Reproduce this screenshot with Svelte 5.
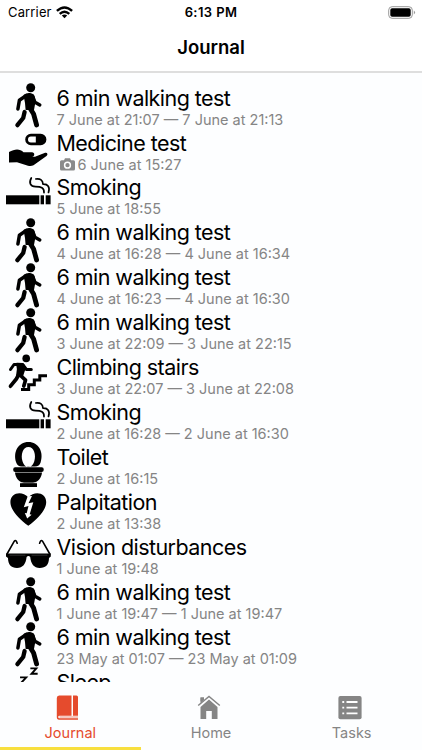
<script>
  const entries = [
    { icon: 'walk', title: '6 min walking test', time: '7 June at 21:07 — 7 June at 21:13' },
    { icon: 'medicine', title: 'Medicine test', time: '6 June at 15:27', photo: true },
    { icon: 'smoke', title: 'Smoking', time: '5 June at 18:55' },
    { icon: 'walk', title: '6 min walking test', time: '4 June at 16:28 — 4 June at 16:34' },
    { icon: 'walk', title: '6 min walking test', time: '4 June at 16:23 — 4 June at 16:30' },
    { icon: 'walk', title: '6 min walking test', time: '3 June at 22:09 — 3 June at 22:15' },
    { icon: 'stairs', title: 'Climbing stairs', time: '3 June at 22:07 — 3 June at 22:08' },
    { icon: 'smoke', title: 'Smoking', time: '2 June at 16:28 — 2 June at 16:30' },
    { icon: 'toilet', title: 'Toilet', time: '2 June at 16:15' },
    { icon: 'heart', title: 'Palpitation', time: '2 June at 13:38' },
    { icon: 'glasses', title: 'Vision disturbances', time: '1 June at 19:48' },
    { icon: 'walk', title: '6 min walking test', time: '1 June at 19:47 — 1 June at 19:47' },
    { icon: 'walk', title: '6 min walking test', time: '23 May at 01:07 — 23 May at 01:09' },
    { icon: 'sleep', title: 'Sleep' }
  ];
</script>

{#snippet glyph(name)}
  <svg class="glyph" viewBox="0 0 45 45" fill="none" stroke="#000" stroke-linecap="round" stroke-linejoin="round">
    {#if name === 'walk'}
      <circle cx="24.7" cy="4.8" r="4.5" fill="#000" stroke="none" />
      <path d="M17.5 12Q21 9.4 24 10Q28 10.4 28.8 14L29.6 18.2L28 27L19.6 27L19 20Z" fill="#000" stroke="none" />
      <path d="M20 12.6L13.4 17.3L11.9 26" stroke-width="3.5" />
      <path d="M26.5 13L29 19.3L33.8 22" stroke-width="3.4" />
      <path d="M23.3 24L27.6 31L30.6 42" stroke-width="4.8" />
      <path d="M18.6 29L17.2 35L11.4 42.2" stroke-width="4.3" />
    {:else if name === 'medicine'}
      <rect x="20.6" y="7.2" width="18.4" height="8.6" rx="4.3" stroke-width="2.8" />
      <path d="M29.8 7h5a4.5 4.5 0 0 1 0 9h-5z" fill="#000" stroke="none" />
      <path d="M3 24C9 20.5 14 20.5 17.5 24.3H26C29 24.3 29 28.5 26 28.8H19.5H29L38.5 25C41.5 24 42.3 26.5 40.5 28L27.5 37.3Q25 38.4 22 37.7L11 34.2L3 34.5Z" fill="#000" stroke="none" />
    {:else if name === 'smoke'}
      <g fill="#000" stroke="none">
        <rect x="0" y="22.3" width="33.3" height="9" />
        <rect x="34.6" y="22.3" width="3.4" height="9" />
        <rect x="39.7" y="22.3" width="4.9" height="9" />
      </g>
      <path d="M25.3 5C22.5 10 24.5 13.5 29.5 13.7C35 13.8 38.3 14.5 38 19.6" stroke-width="1.7" />
      <path d="M29.8 6C34.5 5.5 36.8 7 37 11.2C42 11 44.2 14 42.5 19.4" stroke-width="1.7" />
    {:else if name === 'stairs'}
      <circle cx="20.2" cy="5.4" r="3.8" fill="#000" stroke="none" />
      <path d="M11 10.7L17 11L19 14.5L16.2 23L11 22.3L11.8 16Z" fill="#000" stroke-width="1.8" />
      <path d="M14 11.4L8 11.5L4.5 16.5M17 12L20.5 16.5H25.3" stroke-width="3" />
      <path d="M12.5 22L10.3 26L4.5 33.2M14 22L19.5 27.2L17.8 33" stroke-width="3.7" />
      <path d="M15 36.5H22.7V31.7H28.3V27H33.8V22.8H41" stroke-width="3" stroke-linecap="butt" stroke-linejoin="miter" />
    {:else if name === 'toilet'}
      <path fill="#000" stroke="none" fill-rule="evenodd" d="M22.4 0C32.6 0 38 10 34.6 20.5C33.7 23.3 32 24.4 29 24.4H15.8C12.8 24.4 11.1 23.3 10.2 20.5C6.8 10 12.2 0 22.4 0ZM22.4 5C16.8 5 14.5 13 16.5 19.3C18 24 20 24.8 22.4 24.8S26.8 24 28.3 19.3C30.3 13 28 5 22.4 5Z" />
      <rect x="7.2" y="25.2" width="30.5" height="4.7" rx="2" fill="#000" stroke="none" />
      <path d="M9 30.6H36C35.5 36 32 40.4 27 40.8L31 41.2V45H14V41.2L18 40.8C13 40.4 9.5 36 9 30.6Z" fill="#000" stroke="none" />
      <path d="M15 40.8H30" stroke="#aaa" stroke-width=".7" />
    {:else if name === 'heart'}
      <path d="M22.3 38.8C12 31.5 4.4 22.5 4.4 15C4.4 6 15.4 3 22.3 10.2C29.2 3 40.2 6 40.2 15C40.2 22.5 32.6 31.5 22.3 38.8Z" fill="#000" stroke="none" />
      <path d="M21.7 9.2L17.8 20.2L22.5 19L20.7 26.2L18.8 26L21.2 31.5L25.6 27.7L23.7 27.2L27.3 15.3L22.5 16.3L26 9Z" fill="#fff" stroke="none" />
    {:else if name === 'glasses'}
      <path d="M1 22L8.3 9.2Q9.8 7.2 11.2 11.2M43.8 22L36.5 9.2Q35 7.2 33.6 11.2" stroke-width="1.6" />
      <path d="M0 21.5H44.8V24.5L43 26C43 32.5 40 36 33.7 36C28 36 25 32 24.2 25Q22.4 23.2 20.6 25C19.8 32 16.8 36 11 36C5 36 2 32.5 2 26L0 24.5Z" fill="#000" stroke="none" />
      <path d="M4 23.2H19M26 23.2H41" stroke="#777" stroke-width=".4" />
    {:else}
      <path d="M25.3 1.4H30.3L25.5 6.8H30.7M15 10.4H20.2L15 16H20.5" stroke-width="1.9" stroke-linecap="square" stroke-linejoin="miter" />
    {/if}
  </svg>
{/snippet}

<div class="phone">
  <div class="status">
    <div class="carrier">
      <span>Carrier</span>
      <svg width="17" height="13" viewBox="0 0 17 13" fill="none" stroke="#000" stroke-width="2.4">
        <path d="M.9 4.9Q8.5-2.1 16.1 4.9M3.7 7.8Q8.5 3.5 13.3 7.8" />
        <path d="M5.8 9.5Q8.5 7.5 11.2 9.5L8.5 12.2Z" fill="#000" stroke="none" />
      </svg>
    </div>
    <span class="clock">6:13 PM</span>
    <svg class="battery" width="28" height="13" viewBox="0 0 28 13">
      <rect x=".7" y=".7" width="23.6" height="11.6" rx="3.4" fill="none" stroke="#999" />
      <rect x="2.3" y="2.3" width="20.4" height="8.4" rx="1.8" />
      <path d="M25.8 4.4Q28.4 6.5 25.8 8.6Z" fill="#999" />
    </svg>
  </div>
  <header>Journal</header>

  <main>
    {#each entries as entry}
      <article>
        {@render glyph(entry.icon)}
        <div class="text">
          <h2>{entry.title}</h2>
          {#if entry.time}
            <p>
              {#if entry.photo}
                <svg class="camera" width="15" height="13" viewBox="0 0 15 13">
                  <path d="M1.5 2.2H4L5 .2H10L11 2.2H13.5Q15 2.2 15 3.7V11Q15 12.5 13.5 12.5H1.5Q0 12.5 0 11V3.7Q0 2.2 1.5 2.2Z" fill="#8b8b8b" />
                  <circle cx="7.5" cy="7.2" r="2.9" fill="none" stroke="#fff" stroke-width="1.5" />
                </svg>
              {/if}
              <span>{entry.time}</span>
            </p>
          {/if}
        </div>
      </article>
    {/each}
  </main>

  <nav>
    <div class="tab active">
      <svg width="24" height="26" viewBox="0 0 24 26" fill="#e54b2d">
        <path d="M3.2.5H15.5V20.7H3.5Q2.2 20.8 2.2 22Q2.2 23.2 3.5 23.3H22V24.8H3Q.8 24.8.8 22V3Q.8.5 3.2.5ZM17 .5H20.5Q22 .5 22 2V20.7H17Z" />
        <path d="M3.5 21.7H22V22.3H3.5Z" />
      </svg>
      <span>Journal</span>
    </div>
    <div class="tab">
      <svg width="24" height="26" viewBox="0 0 24 26" fill="#858585">
        <path d="M3.5 2.5H7V5.1L3.5 8.1ZM12 4.5L20.5 12V24H14.8V16H9.2V24H3.5V12Z" />
        <path d="M1.2 10.5L12 1.5L22.8 10.5" fill="none" stroke="#fdfeff" stroke-width="3.4" />
        <path d="M1.2 10.5L12 1.5L22.8 10.5" fill="none" stroke="#858585" stroke-width="1.5" />
        <path d="M3.5 2.5H7V5.1L3.5 8.1Z" />
      </svg>
      <span>Home</span>
    </div>
    <div class="tab">
      <svg width="24" height="26" viewBox="0 0 24 26">
        <rect x=".4" y="1" width="23.2" height="23.2" rx="2" fill="#858585" />
        <path d="M8.5 7H19.5M8.5 12.6H19.5M8.5 18.3H19.5M4.3 7H6.2M4.3 12.6H6.2M4.3 18.3H6.2" stroke="#fff" stroke-width="1.8" />
      </svg>
      <span>Tasks</span>
    </div>
  </nav>
  <div class="indicator"></div>
</div>

<style>
  .phone {
    width: 422px;
    height: 750px;
    display: flex;
    flex-direction: column;
    overflow: hidden;
    background: #fdfeff;
    color: #000;
    font-family: Inter, 'Liberation Sans', sans-serif;
  }
  .status {
    display: grid;
    grid-template-columns: 1fr auto 1fr;
    align-items: center;
    height: 24px;
    flex: none;
    padding: 0 6px 0 8px;
    background: #fff;
    font-size: 13px;
    line-height: 24px;
  }
  .carrier {
    display: flex;
    align-items: center;
    gap: 4px;
    letter-spacing: 0.15px;
  }
  .clock {
    margin-right: 2px;
    font-weight: 600;
    letter-spacing: 0.4px;
  }
  .battery {
    justify-self: end;
  }
  header {
    height: 47px;
    flex: none;
    border-bottom: 2px solid #dedede;
    background: #fff;
    font-size: 18.5px;
    font-weight: 600;
    line-height: 46px;
    text-align: center;
  }
  main {
    flex: none;
    height: 609px;
    box-sizing: border-box;
    padding: 10px 0 0 6px;
    overflow: hidden;
  }
  article {
    display: flex;
    height: 44.93px;
    gap: 5.5px;
  }
  .glyph {
    width: 45px;
    height: 45px;
    flex: none;
    overflow: visible;
  }
  .text {
    padding-top: 0.6px;
    white-space: nowrap;
  }
  h2 {
    margin: 0;
    font-size: 21.5px;
    font-weight: 400;
    line-height: 28px;
    letter-spacing: -0.55px;
  }
  p {
    display: flex;
    align-items: center;
    margin: 0;
    height: 15px;
    color: #858585;
    font-size: 14.5px;
    line-height: 15px;
  }
  .camera {
    margin: 0 3px;
  }
  nav {
    display: grid;
    grid-template-columns: repeat(3, 1fr);
    height: 65px;
    flex: none;
    color: #858585;
    font-size: 14.5px;
  }
  .tab {
    display: flex;
    flex-direction: column;
    align-items: center;
    padding-top: 13px;
  }
  .tab svg {
    margin-right: 4px;
  }
  .tab span {
    line-height: 24px;
  }
  .active {
    color: #e54b2d;
  }
  .indicator {
    width: 141px;
    height: 3px;
    flex: none;
    background: #f8df3e;
  }
</style>
